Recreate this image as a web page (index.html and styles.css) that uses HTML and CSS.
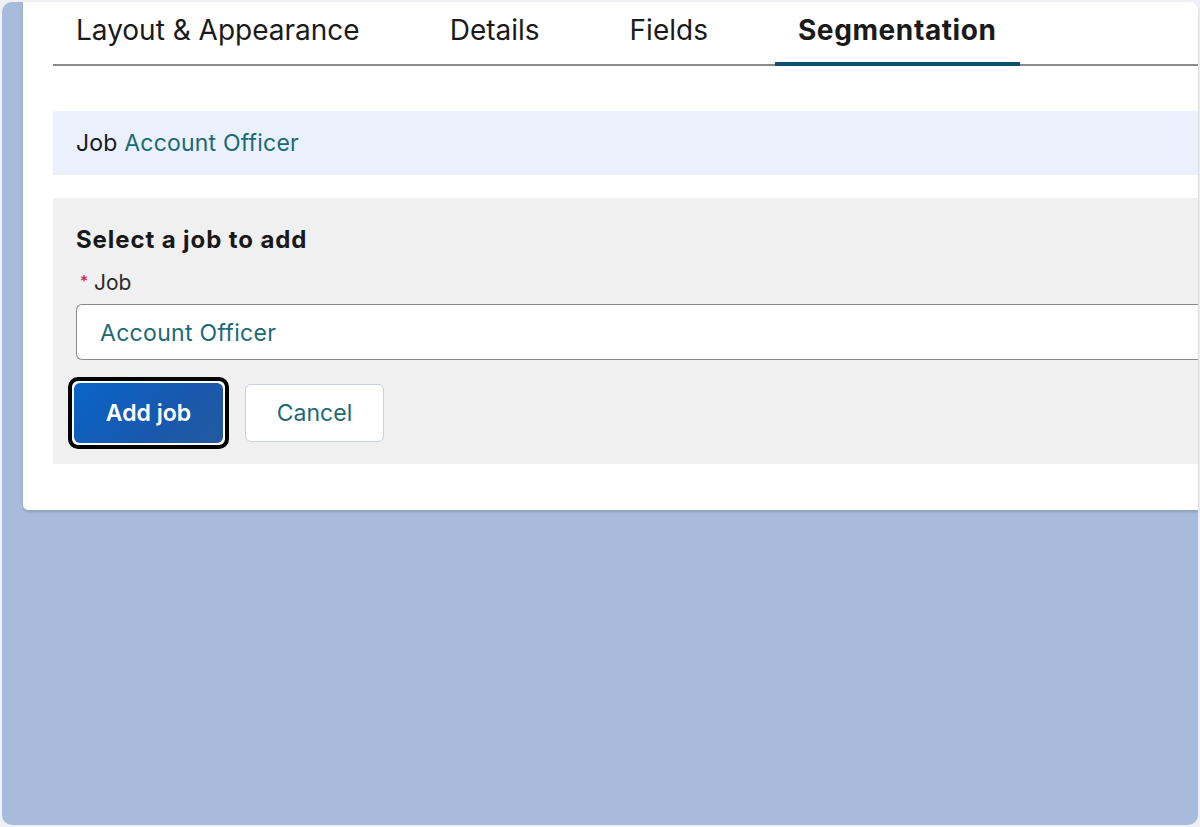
FILE: index.html
```html
<!DOCTYPE html>
<html>
<head>
<meta charset="utf-8">
<link rel="stylesheet" href="styles.css">
</head>
<body>
<div class="frame">
  <div class="card">
    <nav class="tabs">
      <div class="tab">Layout &amp; Appearance</div>
      <div class="tab">Details</div>
      <div class="tab">Fields</div>
      <div class="tab active">Segmentation</div>
    </nav>
    <div class="info">Job <span class="teal">Account Officer</span></div>
    <section class="form">
      <h2 class="title">Select a job to add</h2>
      <label class="label"><span class="req">*</span>Job</label>
      <div class="input">Account Officer</div>
      <div class="actions">
        <div class="focus-ring"><button class="btn primary">Add job</button></div>
        <button class="btn neutral">Cancel</button>
      </div>
    </section>
  </div>
</div>
</body>
</html>
```

FILE: styles.css
```css
html, body {
  margin: 0;
  padding: 0;
}
body {
  background: #eef0f6;
  width: 1200px;
  height: 827px;
  overflow: hidden;
  font-family: Inter, "Liberation Sans", sans-serif;
  color: #181818;
}
.frame {
  margin: 2px 2px 0 2px;
  height: 823px;
  background: #a8bbdb;
  border-radius: 10px;
  padding-left: 21px;
  box-sizing: border-box;
}
.card {
  background: #fff;
  height: 508px;
  border-radius: 0 8px 0 5px;
  padding: 0 0 0 30px;
  box-sizing: border-box;
  box-shadow: 0 2px 3px rgba(0, 0, 0, 0.16);
}
.tabs {
  display: flex;
  gap: 44px;
  height: 62px;
  border-bottom: 2px solid #8a8a8a;
  align-items: stretch;
}
.tab {
  padding: 0 23px;
  font-size: 28px;
  line-height: 56px;
  color: #1a1a1a;
  position: relative;
}
.tab.active {
  font-weight: 700;
  letter-spacing: 0.6px;
}
.tab.active::after {
  content: "";
  position: absolute;
  left: 0;
  right: 0;
  bottom: -2px;
  height: 4px;
  background: #0b4f6c;
}
.info {
  margin-top: 45px;
  height: 64px;
  background: #eaf1fc;
  padding-left: 23px;
  font-size: 23px;
  letter-spacing: 0.2px;
  line-height: 64px;
}
.teal {
  color: #1a6a77;
}
.form {
  margin-top: 23px;
  background: #f0f0f0;
  height: 266px;
  padding: 24px 0 0 23px;
  box-sizing: border-box;
}
.title {
  margin: 0;
  font-size: 24px;
  font-weight: 700;
  letter-spacing: 0.9px;
  line-height: 36px;
}
.label {
  display: block;
  font-size: 21px;
  line-height: 32px;
  color: #2a2a2a;
  margin-top: 7px;
}
.req {
  color: #c0152f;
  font-size: 16px;
  margin: 0 6px 0 4px;
  vertical-align: 3px;
}
.input {
  margin-top: 5px;
  height: 56px;
  background: #fff;
  border: 1.5px solid #8a8a8a;
  border-right: none;
  border-radius: 6px 0 0 6px;
  box-sizing: border-box;
  padding-left: 23px;
  font-size: 23px;
  letter-spacing: 0.3px;
  line-height: 56px;
  color: #1a6a77;
}
.actions {
  display: flex;
  align-items: center;
  gap: 16px;
  margin-top: 17px;
  margin-left: -8px;
}
.focus-ring {
  border: 4px solid #000;
  border-radius: 10px;
  padding: 2px;
  background: #fff;
  display: flex;
}
.btn {
  font-family: inherit;
  font-size: 23px;
  height: 60px;
  border-radius: 6px;
  cursor: pointer;
}
.primary {
  width: 149px;
  border: none;
  color: #fff;
  font-weight: 600;
  background: linear-gradient(135deg, #0865c9 0%, #1958ae 60%, #235aa0 100%);
}
.neutral {
  width: 139px;
  height: 58px;
  background: #fff;
  border: 1.5px solid #c8d1dc;
  color: #1a6a77;
}
```
